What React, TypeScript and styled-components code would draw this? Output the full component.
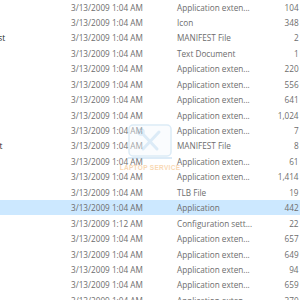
import styled, { createGlobalStyle } from "styled-components";

type FileRow = {
  name: string;
  date: string;
  type: string;
  size: string;
  selected?: boolean;
};

const FILES: FileRow[] = [
  { name: "atl90.dll", date: "3/13/2009 1:04 AM", type: "Application exten...", size: "104" },
  { name: "app.ico", date: "3/13/2009 1:04 AM", type: "Icon", size: "348" },
  { name: "Microsoft.VC90.MFC.manifest", date: "3/13/2009 1:04 AM", type: "MANIFEST File", size: "2" },
  { name: "readme.txt", date: "3/13/2009 1:04 AM", type: "Text Document", size: "1" },
  { name: "mfc90.dll", date: "3/13/2009 1:04 AM", type: "Application exten...", size: "220" },
  { name: "mfc90u.dll", date: "3/13/2009 1:04 AM", type: "Application exten...", size: "556" },
  { name: "msvcp90.dll", date: "3/13/2009 1:04 AM", type: "Application exten...", size: "641" },
  { name: "msvcr90.dll", date: "3/13/2009 1:04 AM", type: "Application exten...", size: "1,024" },
  { name: "mfcm90.dll", date: "3/13/2009 1:04 AM", type: "Application exten...", size: "7" },
  { name: "Microsoft.VC90.ATL.manifest", date: "3/13/2009 1:04 AM", type: "MANIFEST File", size: "8" },
  { name: "msvcm90.dll", date: "3/13/2009 1:04 AM", type: "Application exten...", size: "61" },
  { name: "sqlceme35.dll", date: "3/13/2009 1:04 AM", type: "Application exten...", size: "1,414" },
  { name: "stdole.tlb", date: "3/13/2009 1:04 AM", type: "TLB File", size: "19" },
  { name: "setup.exe", date: "3/13/2009 1:04 AM", type: "Application", size: "442", selected: true },
  { name: "setup.ini", date: "3/13/2009 1:12 AM", type: "Configuration sett...", size: "22" },
  { name: "sqlceqp35.dll", date: "3/13/2009 1:04 AM", type: "Application exten...", size: "657" },
  { name: "sqlcese35.dll", date: "3/13/2009 1:04 AM", type: "Application exten...", size: "649" },
  { name: "sqlceer35.dll", date: "3/13/2009 1:04 AM", type: "Application exten...", size: "94" },
  { name: "sqlceoledb.dll", date: "3/13/2009 1:04 AM", type: "Application exten...", size: "659" },
  { name: "vcomp90.dll", date: "3/13/2009 1:04 AM", type: "Application exten...", size: "370" },
];

function App() {
  return (
    <>
      <GlobalStyle />
      <Window>
        <List>
          {FILES.map((f, i) => (
            <Row key={i} $selected={f.selected}>
              <NameCell>{f.name}</NameCell>
              <Cell>{f.date}</Cell>
              <Cell>{f.type}</Cell>
              <SizeCell>{f.size} KB</SizeCell>
            </Row>
          ))}
        </List>
        <Watermark>
          <svg width="44" height="35" viewBox="0 0 44 35">
            <rect x="1" y="1" width="42" height="31" rx="4" fill="#f4f9fd" stroke="#a9cfec" strokeWidth="1.5" />
            <path d="M13 8 L29 25 M31 8 L15 25" stroke="#a9cfec" strokeWidth="3" strokeLinecap="round" />
            <circle cx="13" cy="8" r="3" fill="none" stroke="#a9cfec" strokeWidth="1.5" />
            <rect x="0" y="33" width="44" height="2" fill="#a9cfec" />
          </svg>
          <WatermarkText>LAPTOP SERVICE</WatermarkText>
        </Watermark>
      </Window>
    </>
  );
}

const GlobalStyle = createGlobalStyle`
  html, body {
    margin: 0;
    padding: 0;
    background: #fff;
    overflow: hidden;
  }
`;

const Window = styled.div`
  position: relative;
  width: 300px;
  height: 300px;
  overflow: hidden;
  background: #fff;
  font-family: "Open Sans", "Noto Sans", sans-serif;
  font-size: 8.2px;
`;

const List = styled.div`
  display: flex;
  flex-direction: column;
  margin-top: -0.7px;
  margin-left: -180px;
  width: 500px;
`;

const Row = styled.div<{ $selected?: boolean }>`
  display: grid;
  grid-template-columns: 251px 106px 80px 54px;
  align-items: center;
  height: 15.44px;
  background: ${(p) => (p.$selected ? "#cce8ff" : "transparent")};
  white-space: nowrap;
`;

const NameCell = styled.div`
  padding-left: 73px;
  color: #1e1e1e;
  overflow: hidden;
`;

const Cell = styled.div`
  color: #6d6d6d;
`;

const SizeCell = styled.div`
  color: #6d6d6d;
  text-align: right;
`;

const Watermark = styled.div`
  position: absolute;
  left: 118px;
  top: 124px;
  width: 64px;
  display: flex;
  flex-direction: column;
  align-items: center;
  gap: 5px;
  opacity: 0.4;
  pointer-events: none;
`;

const WatermarkText = styled.div`
  font-family: "Liberation Sans", sans-serif;
  font-size: 6.5px;
  font-weight: bold;
  color: #f0a040;
  letter-spacing: 0.3px;
  white-space: nowrap;
`;

export default App;
